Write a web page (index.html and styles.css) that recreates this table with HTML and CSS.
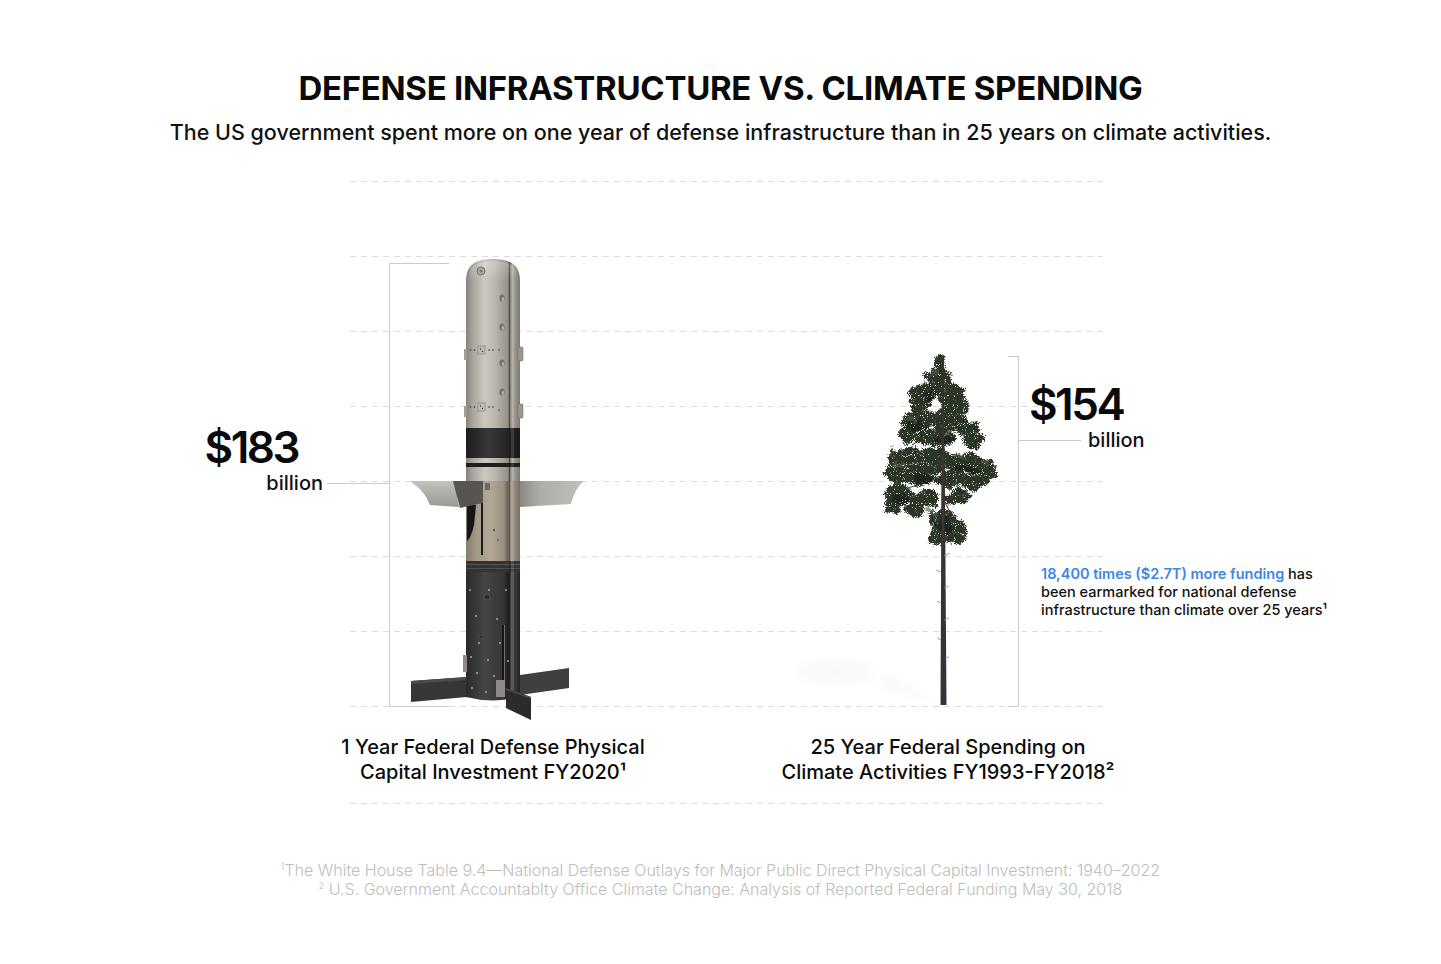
FILE: index.html
```html
<!DOCTYPE html>
<html lang="en">
<head>
<meta charset="utf-8">
<title>Defense Infrastructure vs. Climate Spending</title>
<link rel="stylesheet" href="styles.css">
</head>
<body>
<main class="page">
  <header class="header">
    <h1 class="title">DEFENSE INFRASTRUCTURE VS. CLIMATE SPENDING</h1>
    <p class="subtitle">The US government spent more on one year of defense infrastructure than in 25 years on climate activities.</p>
  </header>

  <section class="chart">
    <div class="gridlines">
      <div class="gridline"></div>
      <div class="gridline"></div>
      <div class="gridline"></div>
      <div class="gridline"></div>
      <div class="gridline"></div>
      <div class="gridline"></div>
      <div class="gridline"></div>
      <div class="gridline"></div>
    </div>

    <div class="chart-content">
      <div class="value value-left">
        <div class="amount">$183</div>
        <div class="unit-row">
          <span class="unit">billion</span>
          <span class="connector connector-left"></span>
        </div>
      </div>

      <svg class="missile" width="195" height="465" viewBox="0 0 195 465" aria-hidden="true">
        <defs>
          <linearGradient id="silver" gradientUnits="userSpaceOnUse" x1="466" y1="0" x2="520" y2="0">
            <stop offset="0" stop-color="#86827a"/>
            <stop offset="0.12" stop-color="#a8a49c"/>
            <stop offset="0.35" stop-color="#cbc8c1"/>
            <stop offset="0.55" stop-color="#b9b5ad"/>
            <stop offset="0.77" stop-color="#96928a"/>
            <stop offset="0.8" stop-color="#6d6963"/>
            <stop offset="0.86" stop-color="#aaa69e"/>
            <stop offset="1" stop-color="#7b7770"/>
          </linearGradient>
          <linearGradient id="tan" gradientUnits="userSpaceOnUse" x1="466" y1="0" x2="520" y2="0">
            <stop offset="0" stop-color="#877d6c"/>
            <stop offset="0.2" stop-color="#a39986"/>
            <stop offset="0.45" stop-color="#b2a895"/>
            <stop offset="0.7" stop-color="#9a9080"/>
            <stop offset="0.78" stop-color="#655e54"/>
            <stop offset="0.84" stop-color="#a49b8a"/>
            <stop offset="1" stop-color="#776e61"/>
          </linearGradient>
          <linearGradient id="dark" gradientUnits="userSpaceOnUse" x1="466" y1="0" x2="520" y2="0">
            <stop offset="0" stop-color="#2a2a2a"/>
            <stop offset="0.35" stop-color="#454545"/>
            <stop offset="0.7" stop-color="#353535"/>
            <stop offset="0.78" stop-color="#1c1c1c"/>
            <stop offset="0.84" stop-color="#484848"/>
            <stop offset="1" stop-color="#252525"/>
          </linearGradient>
          <linearGradient id="band" gradientUnits="userSpaceOnUse" x1="466" y1="0" x2="520" y2="0">
            <stop offset="0" stop-color="#1c1c1c"/>
            <stop offset="0.4" stop-color="#383838"/>
            <stop offset="1" stop-color="#1a1a1a"/>
          </linearGradient>
          <linearGradient id="dome" x1="0" y1="0" x2="0" y2="1">
            <stop offset="0" stop-color="#fff" stop-opacity="0.25"/>
            <stop offset="1" stop-color="#fff" stop-opacity="0"/>
          </linearGradient>
          <linearGradient id="wingL" x1="0" y1="0" x2="0" y2="1">
            <stop offset="0" stop-color="#c4c2bd"/>
            <stop offset="1" stop-color="#9a9893"/>
          </linearGradient>
          <linearGradient id="wingR" x1="0" y1="0" x2="1" y2="0">
            <stop offset="0" stop-color="#8a8884"/>
            <stop offset="0.3" stop-color="#aeaca7"/>
            <stop offset="1" stop-color="#c2c0bb"/>
          </linearGradient>
        </defs>
        <g transform="translate(-389 -259)">
          <!-- bracket -->
          <path d="M449,263.5 H389.5 V706.5 H449" fill="none" stroke="#cbcbcb" stroke-width="1"/>

          <!-- rear fins -->
          <polygon points="411,681 467,677 467,697 411,702" fill="#363636"/>
          <polygon points="520,675 569,668 569,688 520,695" fill="#3f3f3f"/>
          <polygon points="411,681 467,677 467,680 411,684" fill="#4a4a4a"/>

          <!-- body: silver top -->
          <path d="M466,281 C466,265 475,259 493,259 C511,259 520,265 520,281 L520,428 L466,428 Z" fill="url(#silver)"/>
          <path d="M468,281 C468,267 476,261 493,261 C510,261 518,267 518,281 Z" fill="url(#dome)"/>
          <!-- black band -->
          <rect x="466" y="428" width="54" height="30" fill="url(#band)"/>
          <rect x="466" y="458" width="54" height="5" fill="url(#silver)"/>
          <rect x="466" y="463" width="54" height="4" fill="#1e1e1e"/>
          <rect x="466" y="467" width="54" height="14" fill="url(#silver)"/>
          <!-- tan section -->
          <rect x="466" y="481" width="54" height="80" fill="url(#tan)"/>
          <!-- ribbed -->
          <rect x="466" y="561" width="54" height="12" fill="#333"/>
          <line x1="466" y1="564.5" x2="520" y2="564.5" stroke="#555"/>
          <line x1="466" y1="568.5" x2="520" y2="568.5" stroke="#505050"/>
          <!-- dark section -->
          <path d="M466,572 L520,572 L520,697 Q493,704 466,697 Z" fill="url(#dark)"/>

          <!-- seam & rail -->
          <line x1="509.5" y1="262" x2="509.5" y2="700" stroke="#000" stroke-opacity="0.28"/>
          <rect x="511" y="264" width="3" height="430" fill="#fff" opacity="0.12"/>

          <!-- top bolt -->
          <circle cx="481" cy="271" r="4" fill="#aeaaa3" stroke="#77736c" stroke-width="1"/>
          <circle cx="481" cy="271" r="1.5" fill="#7d7972"/>
          <!-- holes -->
          <g fill="#77736c">
            <ellipse cx="502" cy="298" rx="2.6" ry="3.6"/>
            <ellipse cx="502" cy="327" rx="2.6" ry="3.6"/>
            <ellipse cx="502" cy="363" rx="2.6" ry="3.6"/>
            <ellipse cx="502" cy="392" rx="2.6" ry="3.6"/>
          </g>
          <g fill="#b8b4ad">
            <ellipse cx="503" cy="299" rx="1.1" ry="2"/>
            <ellipse cx="503" cy="328" rx="1.1" ry="2"/>
            <ellipse cx="503" cy="364" rx="1.1" ry="2"/>
            <ellipse cx="503" cy="393" rx="1.1" ry="2"/>
          </g>
          <!-- rivet rows -->
          <rect x="478" y="346" width="7" height="8" fill="#c2beb7" stroke="#7a766f" stroke-width="0.6"/>
          <rect x="478" y="403" width="7" height="8" fill="#c2beb7" stroke="#7a766f" stroke-width="0.6"/>
          <g fill="#333">
            <circle cx="470.5" cy="350" r="0.8"/><circle cx="474.5" cy="350" r="0.8"/>
            <circle cx="480.5" cy="349" r="0.7"/><circle cx="482.5" cy="351.5" r="0.7"/>
            <circle cx="489" cy="350" r="0.8"/><circle cx="493" cy="350" r="0.8"/><circle cx="499" cy="350" r="0.8"/>
            <circle cx="470.5" cy="407" r="0.8"/><circle cx="474.5" cy="407" r="0.8"/>
            <circle cx="480.5" cy="406" r="0.7"/><circle cx="482.5" cy="408.5" r="0.7"/>
            <circle cx="489" cy="407" r="0.8"/><circle cx="493" cy="407" r="0.8"/><circle cx="499" cy="410" r="0.8"/>
          </g>
          <!-- side clips -->
          <rect x="518" y="347" width="5" height="14" rx="1" fill="#9b978f" stroke="#6f6b65" stroke-width="0.5"/>
          <rect x="518" y="404" width="5" height="14" rx="1" fill="#9b978f" stroke="#6f6b65" stroke-width="0.5"/>
          <rect x="464" y="349" width="3" height="11" fill="#a29e97"/>
          <rect x="464" y="406" width="3" height="11" fill="#a29e97"/>

          <!-- tan details -->
          <rect x="481" y="485" width="2" height="70" fill="#1a1a1a"/>
          <path d="M467,505 L476,505 L474,525 Q471,538 467,541 Z" fill="#161616"/>
          <circle cx="494" cy="530" r="1" fill="#3a3a3a"/>
          <circle cx="498" cy="540" r="0.8" fill="#3a3a3a"/>

          <!-- dark details -->
          <g fill="#a8a8a8">
            <circle cx="470" cy="590" r="1"/><circle cx="489" cy="590" r="1"/><circle cx="506" cy="590" r="1"/>
            <circle cx="476" cy="616" r="1"/><circle cx="497" cy="619" r="1"/>
            <circle cx="479" cy="643" r="1"/><circle cx="500" cy="643" r="1"/>
            <circle cx="471" cy="657" r="1"/><circle cx="488" cy="660" r="1"/><circle cx="508" cy="661" r="1"/>
            <circle cx="477" cy="673" r="1"/><circle cx="494" cy="676" r="1"/>
            <circle cx="472" cy="688" r="1"/><circle cx="486" cy="692" r="1"/>
          </g>
          <circle cx="487" cy="597" r="3" fill="#2c2c2c" stroke="#5c5c5c" stroke-width="0.8"/>
          <circle cx="481" cy="637" r="2" fill="#2c2c2c" stroke="#5c5c5c" stroke-width="0.6"/>
          <rect x="502" y="625" width="2" height="56" fill="#161616"/>
          <rect x="504" y="625" width="1" height="56" fill="#6f6f6f"/>
          <rect x="463" y="655" width="4" height="17" fill="#8f8c86"/>

          <!-- wings -->
          <path d="M411,481 L455,481 L459,507 L430,505 Q425,491 411,482 Z" fill="url(#wingL)"/>
          <path d="M453,481 L483,481 L483,503 L460,508 Z" fill="#575550"/>
          <path d="M520,481 L584,481 Q575,488 571,504 L520,507 Z" fill="url(#wingR)"/>
          <rect x="485" y="483" width="5" height="7" fill="#6f6a60"/>

          <!-- front fin and clamp -->
          <rect x="496" y="680" width="9" height="17" fill="#8d8a85"/>
          <polygon points="506,688 531,697 531,720 506,708" fill="#2b2b2b"/>
          <polygon points="506,688 531,697 531,699 506,690" fill="#474747"/>
        </g>
      </svg>

      <svg class="tree" width="229" height="366" viewBox="0 0 229 366" aria-hidden="true">
        <defs>
          <filter id="leaf" x="-30%" y="-30%" width="160%" height="160%">
            <feTurbulence type="fractalNoise" baseFrequency="0.09" numOctaves="2" seed="4" result="lo"/>
            <feDisplacementMap in="SourceGraphic" in2="lo" scale="12" xChannelSelector="R" yChannelSelector="G" result="d1"/>
            <feTurbulence type="fractalNoise" baseFrequency="0.9" numOctaves="2" seed="7" result="hi"/>
            <feDisplacementMap in="d1" in2="hi" scale="6" xChannelSelector="R" yChannelSelector="G" result="d2"/>
            <feTurbulence type="fractalNoise" baseFrequency="1.1" numOctaves="1" seed="2" result="n2"/>
            <feColorMatrix in="n2" type="matrix" values="0 0 0 0 0  0 0 0 0 0  0 0 0 0 0  0 0 0 -9 6.6" result="holes"/>
            <feComposite in="d2" in2="holes" operator="in"/>
          </filter>
          <filter id="blur" x="-50%" y="-50%" width="200%" height="200%">
            <feGaussianBlur stdDeviation="5"/>
          </filter>
        </defs>
        <g transform="translate(-790 -345)">
          <!-- bracket -->
          <path d="M1008,356.5 H1018.5 V706.5 H1008" fill="none" stroke="#cbcbcb" stroke-width="1"/>

          <!-- ground shadow -->
          <ellipse cx="835" cy="672" rx="42" ry="14" fill="#000" opacity="0.018" filter="url(#blur)"/>
          <path d="M943,705 L880,682 L884,678 Z" fill="#000" opacity="0.07" filter="url(#blur)"/>

          <!-- trunk -->
          <polygon points="942,356 944,356 946.5,705 940.5,705" fill="#33343a"/>
          <g stroke="#8f8a89" stroke-width="0.8">
            <line x1="944" y1="556" x2="950" y2="553"/>
            <line x1="941" y1="572" x2="936" y2="570"/>
            <line x1="944" y1="588" x2="949" y2="586"/>
            <line x1="941" y1="603" x2="937" y2="601"/>
            <line x1="944" y1="620" x2="949" y2="618"/>
            <line x1="941" y1="640" x2="937" y2="638"/>
            <line x1="945" y1="658" x2="949" y2="657"/>
          </g>
          <!-- branches -->
          <g stroke="#5b4c48" stroke-width="1.1" fill="none">
            <path d="M942,430 Q925,436 912,445"/>
            <path d="M943,460 Q960,466 980,470"/>
            <path d="M942,478 Q920,482 900,492"/>
            <path d="M943,500 Q950,510 955,525"/>
          </g>

          <!-- foliage -->
          <g filter="url(#leaf)" fill="#2a3628">
            <ellipse cx="940" cy="362" rx="5" ry="10"/>
            <ellipse cx="938" cy="378" rx="14" ry="11"/>
            <ellipse cx="927" cy="391" rx="17" ry="10"/>
            <ellipse cx="951" cy="394" rx="15" ry="11"/>
            <ellipse cx="919" cy="404" rx="12" ry="8"/>
            <ellipse cx="958" cy="407" rx="12" ry="9"/>
            <ellipse cx="917" cy="421" rx="16" ry="10"/>
            <ellipse cx="946" cy="420" rx="19" ry="11"/>
            <ellipse cx="968" cy="428" rx="13" ry="9"/>
            <ellipse cx="909" cy="434" rx="10" ry="8"/>
            <ellipse cx="936" cy="438" rx="21" ry="9"/>
            <ellipse cx="973" cy="442" rx="10" ry="7"/>
            <ellipse cx="905" cy="457" rx="16" ry="10"/>
            <ellipse cx="934" cy="460" rx="19" ry="11"/>
            <ellipse cx="964" cy="464" rx="20" ry="11"/>
            <ellipse cx="988" cy="470" rx="10" ry="9"/>
            <ellipse cx="897" cy="473" rx="12" ry="10"/>
            <ellipse cx="920" cy="475" rx="17" ry="10"/>
            <ellipse cx="951" cy="479" rx="15" ry="8"/>
            <ellipse cx="975" cy="482" rx="13" ry="8"/>
            <ellipse cx="898" cy="494" rx="13" ry="12"/>
            <ellipse cx="924" cy="499" rx="14" ry="10"/>
            <ellipse cx="957" cy="497" rx="13" ry="9"/>
            <ellipse cx="893" cy="507" rx="9" ry="8"/>
            <ellipse cx="914" cy="510" rx="10" ry="7"/>
            <ellipse cx="942" cy="520" rx="15" ry="12"/>
            <ellipse cx="956" cy="531" rx="11" ry="12"/>
            <ellipse cx="937" cy="537" rx="9" ry="8"/>
          </g>
          <g filter="url(#leaf)" fill="#1b241a" opacity="0.85">
            <ellipse cx="930" cy="395" rx="9" ry="5"/>
            <ellipse cx="945" cy="440" rx="12" ry="5"/>
            <ellipse cx="925" cy="479" rx="12" ry="5"/>
            <ellipse cx="965" cy="469" rx="12" ry="5"/>
            <ellipse cx="900" cy="499" rx="8" ry="6"/>
            <ellipse cx="945" cy="526" rx="9" ry="7"/>
            <ellipse cx="915" cy="425" rx="8" ry="5"/>
          </g>
          <g filter="url(#leaf)" fill="#52614b" opacity="0.6">
            <ellipse cx="935" cy="372" rx="5" ry="3"/>
            <ellipse cx="912" cy="418" rx="5" ry="3"/>
            <ellipse cx="960" cy="455" rx="6" ry="3"/>
            <ellipse cx="900" cy="465" rx="5" ry="3"/>
            <ellipse cx="930" cy="512" rx="5" ry="3"/>
            <ellipse cx="985" cy="465" rx="4" ry="3"/>
          </g>
          <polygon points="942.3,400 943.7,400 944.5,545 941.5,545" fill="#3b3536"/>
        </g>
      </svg>

      <div class="value value-right">
        <div class="amount">$154</div>
        <div class="unit-row">
          <span class="connector connector-right"></span>
          <span class="unit">billion</span>
        </div>
        <p class="note"><span class="highlight">18,400 times ($2.7T) more funding</span> has<br>been earmarked for national defense<br>infrastructure than climate over 25 years¹</p>
      </div>
    </div>
  </section>

  <div class="labels">
    <p class="label">1 Year Federal Defense Physical<br>Capital Investment FY2020¹</p>
    <p class="label">25 Year Federal Spending on<br>Climate Activities FY1993-FY2018²</p>
  </div>

  <div class="gridline gridline-bottom"></div>

  <footer class="sources">
    <p><sup>1</sup>The White House Table 9.4—National Defense Outlays for Major Public Direct Physical Capital Investment: 1940–2022</p>
    <p><sup>2</sup> U.S. Government Accountablty Office Climate Change: Analysis of Reported Federal Funding May 30, 2018</p>
  </footer>
</main>
</body>
</html>
```

FILE: styles.css
```css
html, body {
  margin: 0;
  padding: 0;
  background: #ffffff;
}

body {
  font-family: Inter, "Noto Sans", "Liberation Sans", sans-serif;
  color: #0b0b0b;
}

.page {
  width: 1441px;
  min-height: 964px;
}

/* ---------- header ---------- */
.header {
  padding-top: 68px;
  text-align: center;
}

.title {
  margin: 0;
  font-size: 33px;
  line-height: 40px;
  font-weight: 700;
  letter-spacing: -0.3px;
  color: #0a0a0a;
}

.subtitle {
  margin: 12px 0 0;
  font-size: 21.5px;
  line-height: 24px;
  font-weight: 500;
  color: #111111;
}

/* ---------- chart ---------- */
.chart {
  display: grid;
  margin-top: 37px;
}

.gridlines,
.chart-content {
  grid-area: 1 / 1;
}

.gridlines {
  display: flex;
  flex-direction: column;
  gap: 74px;
  margin-left: 350px;
  width: 753px;
  align-self: start;
}

.gridline {
  height: 1px;
  background: repeating-linear-gradient(90deg, #dcdcdc 0 6px, transparent 6px 11px);
}

.chart-content {
  display: flex;
  align-items: flex-start;
  height: 540px;
}

.value {
  display: flex;
  flex-direction: column;
}

.amount {
  font-size: 44px;
  line-height: 44px;
  font-weight: 600;
  letter-spacing: -2.5px;
  color: #0a0a0a;
}

.unit-row {
  display: flex;
  align-items: center;
  margin-top: 2px;
}

.unit {
  font-size: 20px;
  line-height: 24px;
  font-weight: 500;
  color: #111111;
}

.connector {
  display: block;
  width: 62px;
  height: 1px;
  background: #cbcbcb;
}

.value-left {
  width: 189px;
  margin-left: 200px;
  margin-top: 244px;
  align-items: flex-end;
}

.value-left .amount {
  padding-right: 91px;
}

.connector-left {
  margin-left: 4px;
}

.missile {
  display: block;
  flex: none;
  margin-top: 78px;
}

.tree {
  display: block;
  flex: none;
  margin-left: 206px;
  margin-top: 164px;
}

.value-right {
  margin-top: 201px;
}

.value-right .amount {
  padding-left: 10px;
}

.value-right .unit {
  margin-left: 7px;
}

.note {
  margin: 113px 0 0 22px;
  font-size: 14.5px;
  line-height: 18px;
  font-weight: 500;
  white-space: nowrap;
  color: #111111;
}

.highlight {
  color: #3d86e6;
  font-weight: 600;
}

/* ---------- labels ---------- */
.labels {
  display: flex;
  gap: 55px;
  padding-left: 293px;
  margin-top: 14px;
}

.label {
  width: 400px;
  margin: 0;
  text-align: center;
  font-size: 20px;
  line-height: 25px;
  font-weight: 500;
  color: #0b0b0b;
}

.gridline-bottom {
  margin: 18px 0 0 350px;
  width: 753px;
}

/* ---------- sources ---------- */
.sources {
  margin-top: 57px;
  text-align: center;
  font-size: 16px;
  line-height: 19px;
  font-weight: 300;
  color: #bdbdbd;
}

.sources p {
  margin: 0;
}

.sources sup {
  font-size: 9px;
  line-height: 0;
  vertical-align: 6px;
}
```
